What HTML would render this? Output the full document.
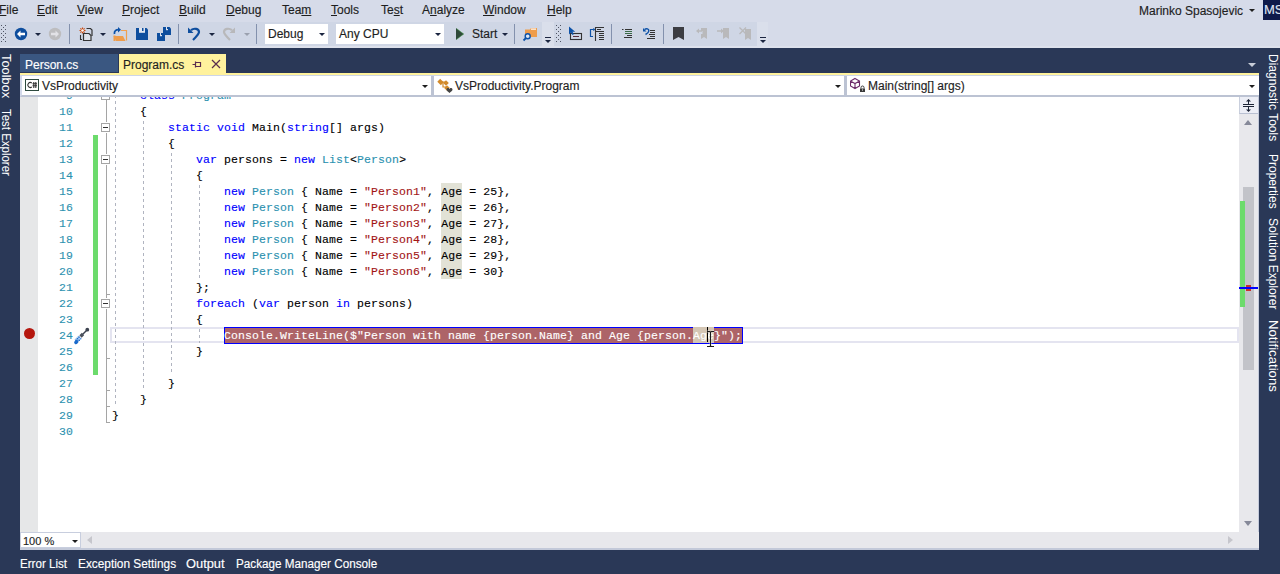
<!DOCTYPE html><html><head><meta charset="utf-8"><style>
*{margin:0;padding:0;box-sizing:border-box}
html,body{width:1280px;height:574px;overflow:hidden}
body{position:relative;background:#2a3857;font-family:"Liberation Sans",sans-serif;font-size:12px;color:#1e1e1e}
.a{position:absolute}
.t{position:absolute;white-space:pre;line-height:14px;-webkit-text-stroke:0.15px}
.menu{top:3px;color:#1e1e1e}
.menu u{text-decoration:underline;text-underline-offset:0.5px;text-decoration-thickness:1px}
.tb{top:22px;height:24px;background:#cfd6e5}
.ovf{top:22px;height:24px;background:#dadfeb}
.sep{top:24px;width:1px;height:20px;background:#8e9bb4}
.code{position:absolute;-webkit-text-stroke:0.12px;left:112px;font-family:"Liberation Mono",monospace;font-size:11.5px;letter-spacing:0.1px;white-space:pre;line-height:16px;height:16px;padding-top:1px;color:#000}
.ln{position:absolute;-webkit-text-stroke:0.1px;left:33px;width:40px;text-align:right;font-family:"Liberation Mono",monospace;font-size:11.5px;letter-spacing:0.1px;line-height:16px;padding-top:1px;color:#2b91af}
.k{color:#0000ff}.ty{color:#2b91af}.s{color:#a31515}
.hl{}
.side{position:absolute;color:#fff;writing-mode:vertical-rl;white-space:pre;line-height:12px}
</style></head><body>
<div class="a" style="left:0;top:0;width:1280px;height:48px;background:#d6dbe9"></div>
<div class="a" style="left:0;top:46px;width:1280px;height:2px;background:#dde1ec"></div>
<div class="t menu" style="left:-1px"><u>F</u>ile</div>
<div class="t menu" style="left:37px"><u>E</u>dit</div>
<div class="t menu" style="left:77px"><u>V</u>iew</div>
<div class="t menu" style="left:122px"><u>P</u>roject</div>
<div class="t menu" style="left:179px"><u>B</u>uild</div>
<div class="t menu" style="left:226px"><u>D</u>ebug</div>
<div class="t menu" style="left:282px">Tea<u>m</u></div>
<div class="t menu" style="left:331px"><u>T</u>ools</div>
<div class="t menu" style="left:381px">Te<u>s</u>t</div>
<div class="t menu" style="left:422px">A<u>n</u>alyze</div>
<div class="t menu" style="left:483px"><u>W</u>indow</div>
<div class="t menu" style="left:547px"><u>H</u>elp</div>
<div class="t" style="left:1139px;top:4px;color:#1e1e1e">Marinko Spasojevic</div>
<div class="a" style="left:1249px;top:9px;width:0;height:0;border-left:3px solid transparent;border-right:3px solid transparent;border-top:3px solid #1e1e1e"></div>
<div class="a" style="left:1263px;top:0;width:17px;height:20px;background:#0e1a4a;overflow:hidden"><div class="t" style="left:1px;top:3px;color:#dfe3f0;font-size:13px">MS</div></div>
<div class="a tb" style="left:0;width:542px"></div>
<div class="a ovf" style="left:542px;width:12px"></div>
<div class="a tb" style="left:554px;width:203px"></div>
<div class="a ovf" style="left:757px;width:11px"></div>
<div class="a" style="left:20px;top:54px;width:98px;height:18px;background:#3a5781"></div>
<div class="t" style="left:25px;top:58px;color:#fff">Person.cs</div>
<div class="a" style="left:119px;top:54px;width:107px;height:19px;background:#fff29d"></div>
<div class="t" style="left:123px;top:58px;color:#1e1e1e">Program.cs</div>
<svg class="a" style="left:192px;top:58px" width="10" height="12" viewBox="0 0 10 12"><path d="M0.5 6.5H3.5M3.5 3.5V9.5M3.5 4.5H8.5V8.5H3.5" stroke="#5a2d4e" stroke-width="1.2" fill="none"/></svg>
<svg class="a" style="left:211px;top:59px" width="10" height="10" viewBox="0 0 10 10"><path d="M1 1L9 9M9 1L1 9" stroke="#5a2d4e" stroke-width="1.2"/></svg>
<div class="a" style="left:1248px;top:63px;width:0;height:0;border-left:4px solid transparent;border-right:4px solid transparent;border-top:4px solid #c8cdd8"></div>
<div id="yl" class="a" style="left:20px;top:73px;width:1239px;height:2px;background:#fff29d"></div>
<div class="a" style="left:20px;top:75px;width:1239px;height:22px;background:#fff;border-top:1px solid #cdd5e8;border-bottom:2px solid #bcc3d3;border-left:2px solid #d3d9ea"></div>
<div class="a" style="left:431px;top:76px;width:3px;height:19px;background:#bcc3d3"></div>
<div class="a" style="left:844px;top:76px;width:3px;height:19px;background:#bcc3d3"></div>
<div class="a" style="left:422px;top:85px;width:0;height:0;border-left:3px solid transparent;border-right:3px solid transparent;border-top:3px solid #1e1e1e"></div>
<div class="a" style="left:835px;top:85px;width:0;height:0;border-left:3px solid transparent;border-right:3px solid transparent;border-top:3px solid #1e1e1e"></div>
<div class="a" style="left:1249px;top:85px;width:0;height:0;border-left:3px solid transparent;border-right:3px solid transparent;border-top:3px solid #1e1e1e"></div>
<div class="a" style="left:25px;top:79px;width:14px;height:12px;border:1px solid #2d4a3e;background:#fff"></div>
<svg class="a" style="left:25px;top:79px" width="14" height="12" viewBox="0 0 14 12"><path d="M6.8 4A2.5 2.5 0 1 0 6.8 8" stroke="#333" stroke-width="1.1" fill="none"/><path d="M8.8 3V9M10.8 3V9M7.5 4.8H12M7.5 6.8H12" stroke="#333" stroke-width="1.1"/></svg>
<div class="t" style="left:42px;top:79px;color:#1e1e1e">VsProductivity</div>
<svg class="a" style="left:437px;top:78px" width="16" height="15" viewBox="0 0 16 15"><g fill="#d28a2a"><rect x="1" y="2" width="5" height="4" transform="rotate(45 3.5 4)"/><rect x="7" y="3" width="4" height="4" transform="rotate(45 9 5)"/><rect x="8" y="8" width="4" height="4" transform="rotate(45 10 10)"/></g><path d="M4 4H9M6 4V9H10" stroke="#d28a2a" stroke-width="1.2" fill="none"/><path d="M9.5 11.5c0-1 0.8-1.5 1.5-1.5s1.2 0.6 1.5 0.9c0.3-0.3 0.8-0.9 1.5-0.9s1.5 0.5 1.5 1.5c0 1.2-1.5 2.3-3 3.4c-1.5-1.1-3-2.2-3-3.4z" fill="#444"/></svg>
<div class="t" style="left:455px;top:79px;color:#1e1e1e">VsProductivity.Program</div>
<svg class="a" style="left:850px;top:77px" width="16" height="16" viewBox="0 0 16 16"><path d="M5 1.5L9.5 4V9L5 11.5L0.5 9V4Z M0.8 4.2L5 6.5L9.2 4.2 M5 6.5V11" stroke="#6c2a6a" stroke-width="1.1" fill="none"/><rect x="10" y="11.5" width="5" height="3.5" fill="#3a3a3a"/><path d="M11 11.5V10.5a1.5 1.5 0 0 1 3 0V11.5" stroke="#3a3a3a" stroke-width="1" fill="none"/><rect x="12" y="12.5" width="1" height="1" fill="#fff"/></svg>
<div class="t" style="left:868px;top:79px;color:#1e1e1e">Main(string[] args)</div>
<div class="a" style="left:20px;top:97px;width:1239px;height:435px;background:#fff"></div>
<div class="a" style="left:20px;top:97px;width:18px;height:435px;background:#e6e7e8"></div>
<div class="a" style="left:20px;top:97px;width:1219px;height:435px;overflow:hidden">
<div class="a" style="left:90px;top:230px;width:1129px;height:16px;border:2px solid #e4e4f0"></div>
<div class="a" style="left:421px;top:86px;width:21px;height:96px;background:#e2e2d6"></div>
<div class="a" style="left:95px;top:-10px;width:1px;height:320px;background:repeating-linear-gradient(transparent 0 2px,#b0b4c0 2px 5px,transparent 5px 6px)"></div>
<div class="a" style="left:123px;top:22px;width:1px;height:272px;background:repeating-linear-gradient(transparent 0 2px,#b0b4c0 2px 5px,transparent 5px 6px)"></div>
<div class="a" style="left:151px;top:54px;width:1px;height:224px;background:repeating-linear-gradient(transparent 0 2px,#b0b4c0 2px 5px,transparent 5px 6px)"></div>
<div class="a" style="left:179px;top:86px;width:1px;height:96px;background:repeating-linear-gradient(transparent 0 2px,#b0b4c0 2px 5px,transparent 5px 6px)"></div>
<div class="a" style="left:179px;top:230px;width:1px;height:16px;background:repeating-linear-gradient(transparent 0 2px,#b0b4c0 2px 5px,transparent 5px 6px)"></div>
<div class="ln" style="top:-10px;left:13px">9</div>
<div class="code" style="top:-10px;left:92px">    <span class="k">class</span> <span class="ty">Program</span></div>
<div class="ln" style="top:6px;left:13px">10</div>
<div class="code" style="top:6px;left:92px">    {</div>
<div class="ln" style="top:22px;left:13px">11</div>
<div class="code" style="top:22px;left:92px">        <span class="k">static</span> <span class="k">void</span> Main(<span class="k">string</span>[] args)</div>
<div class="ln" style="top:38px;left:13px">12</div>
<div class="code" style="top:38px;left:92px">        {</div>
<div class="ln" style="top:54px;left:13px">13</div>
<div class="code" style="top:54px;left:92px">            <span class="k">var</span> persons = <span class="k">new</span> <span class="ty">List</span>&lt;<span class="ty">Person</span>&gt;</div>
<div class="ln" style="top:70px;left:13px">14</div>
<div class="code" style="top:70px;left:92px">            {</div>
<div class="ln" style="top:86px;left:13px">15</div>
<div class="code" style="top:86px;left:92px">                <span class="k">new</span> <span class="ty">Person</span> { Name = <span class="s">&quot;Person1&quot;</span>, <span class="hl">Age</span> = 25},</div>
<div class="ln" style="top:102px;left:13px">16</div>
<div class="code" style="top:102px;left:92px">                <span class="k">new</span> <span class="ty">Person</span> { Name = <span class="s">&quot;Person2&quot;</span>, <span class="hl">Age</span> = 26},</div>
<div class="ln" style="top:118px;left:13px">17</div>
<div class="code" style="top:118px;left:92px">                <span class="k">new</span> <span class="ty">Person</span> { Name = <span class="s">&quot;Person3&quot;</span>, <span class="hl">Age</span> = 27},</div>
<div class="ln" style="top:134px;left:13px">18</div>
<div class="code" style="top:134px;left:92px">                <span class="k">new</span> <span class="ty">Person</span> { Name = <span class="s">&quot;Person4&quot;</span>, <span class="hl">Age</span> = 28},</div>
<div class="ln" style="top:150px;left:13px">19</div>
<div class="code" style="top:150px;left:92px">                <span class="k">new</span> <span class="ty">Person</span> { Name = <span class="s">&quot;Person5&quot;</span>, <span class="hl">Age</span> = 29},</div>
<div class="ln" style="top:166px;left:13px">20</div>
<div class="code" style="top:166px;left:92px">                <span class="k">new</span> <span class="ty">Person</span> { Name = <span class="s">&quot;Person6&quot;</span>, <span class="hl">Age</span> = 30}</div>
<div class="ln" style="top:182px;left:13px">21</div>
<div class="code" style="top:182px;left:92px">            };</div>
<div class="ln" style="top:198px;left:13px">22</div>
<div class="code" style="top:198px;left:92px">            <span class="k">foreach</span> (<span class="k">var</span> person <span class="k">in</span> persons)</div>
<div class="ln" style="top:214px;left:13px">23</div>
<div class="code" style="top:214px;left:92px">            {</div>
<div class="ln" style="top:230px;left:13px">24</div>
<div class="ln" style="top:246px;left:13px">25</div>
<div class="code" style="top:246px;left:92px">            }</div>
<div class="ln" style="top:262px;left:13px">26</div>
<div class="ln" style="top:278px;left:13px">27</div>
<div class="code" style="top:278px;left:92px">        }</div>
<div class="ln" style="top:294px;left:13px">28</div>
<div class="code" style="top:294px;left:92px">    }</div>
<div class="ln" style="top:310px;left:13px">29</div>
<div class="code" style="top:310px;left:92px">}</div>
<div class="ln" style="top:326px;left:13px">30</div>
<div class="a" style="left:204px;top:230px;width:519px;height:17px;background:#ad6468;border:1px solid #0000ff"></div>
<div class="a" style="left:673px;top:230px;width:21px;height:16px;background:#d4c6b4"></div>
<div class="code" style="top:230px;left:204px;color:#fff">Console.WriteLine($&quot;Person with name {person.Name} and Age {person.Age}");</div>
<div class="a" style="left:687px;top:230px;width:1px;height:15px;background:#000"></div>
<svg class="a" style="left:686px;top:233px" width="10" height="18" viewBox="0 0 10 18"><path d="M1 1.5H3.5M5.5 1.5H8M4.5 2V16M1 16.5H8" stroke="#fff" stroke-width="2.2" opacity="0.5"/><path d="M1 1.5H3.5Q4.5 1.5 4.5 2.5V15.5Q4.5 16.5 3.5 16.5H1M8 1.5H5.5Q4.5 1.5 4.5 2.5M4.5 15.5Q4.5 16.5 5.5 16.5H8" stroke="#1a1a1a" stroke-width="1.1" fill="none"/></svg>
<div class="a" style="left:86px;top:3px;width:1px;height:22px;background:#a5a5a5"></div>
<div class="a" style="left:86px;top:36px;width:1px;height:21px;background:#a5a5a5"></div>
<div class="a" style="left:86px;top:68px;width:1px;height:133px;background:#a5a5a5"></div>
<div class="a" style="left:86px;top:212px;width:1px;height:114px;background:#a5a5a5"></div>
<div class="a" style="left:86px;top:197px;width:4px;height:1px;background:#a5a5a5"></div>
<div class="a" style="left:86px;top:261px;width:4px;height:1px;background:#a5a5a5"></div>
<div class="a" style="left:86px;top:293px;width:4px;height:1px;background:#a5a5a5"></div>
<div class="a" style="left:86px;top:309px;width:4px;height:1px;background:#a5a5a5"></div>
<div class="a" style="left:86px;top:325px;width:4px;height:1px;background:#a5a5a5"></div>
<div class="a" style="left:81px;top:-6px;width:9px;height:9px;border:1px solid #a5a5a5;background:#fff"></div>
<div class="a" style="left:83px;top:-2px;width:5px;height:1px;background:#333"></div>
<div class="a" style="left:81px;top:26px;width:9px;height:9px;border:1px solid #a5a5a5;background:#fff"></div>
<div class="a" style="left:83px;top:30px;width:5px;height:1px;background:#333"></div>
<div class="a" style="left:81px;top:58px;width:9px;height:9px;border:1px solid #a5a5a5;background:#fff"></div>
<div class="a" style="left:83px;top:62px;width:5px;height:1px;background:#333"></div>
<div class="a" style="left:81px;top:202px;width:9px;height:9px;border:1px solid #a5a5a5;background:#fff"></div>
<div class="a" style="left:83px;top:206px;width:5px;height:1px;background:#333"></div>
<div class="a" style="left:73px;top:38px;width:5px;height:240px;background:#6cdb6c"></div>
</div>
<div class="a" style="left:24px;top:328px;width:11px;height:11px;border-radius:50%;background:#b5170e"></div>
<svg class="a" style="left:70px;top:324px" width="24" height="22" viewBox="0 0 24 22"><path d="M17.5 5.5L11.5 11.5" stroke="#3d4350" stroke-width="1.4"/><circle cx="17.3" cy="5.7" r="1.9" fill="#3d4350"/><path d="M13 10L10.5 12.5" stroke="#4a505c" stroke-width="3.2"/><path d="M10 13L6 17" stroke="#b3d0f2" stroke-width="4.4" stroke-linecap="butt"/><g fill="#1a6acc"><rect x="8.3" y="12.5" width="1.4" height="1.4"/><rect x="10" y="14" width="1.4" height="1.4" opacity="0.6"/><rect x="6.8" y="14" width="1.4" height="1.4"/><rect x="8.5" y="15.6" width="1.4" height="1.4"/><rect x="5.3" y="15.6" width="1.4" height="1.4" opacity="0.7"/></g><ellipse cx="5.8" cy="17.8" rx="2.3" ry="1.9" transform="rotate(-45 6.3 17.3)" fill="#1a6acc"/></svg>
<div class="a" style="left:1239px;top:97px;width:20px;height:453px;background:#e8e8ec"></div>
<div class="a" style="left:1258px;top:97px;width:1px;height:453px;background:#c4cadb"></div>
<div class="a" style="left:1239px;top:97px;width:19px;height:17px;background:#eceef6;border-left:1px solid #c9cfdd;border-bottom:1px solid #b9c0d2"></div>
<svg class="a" style="left:1239px;top:97px" width="20" height="17" viewBox="0 0 20 17"><g fill="#1b2335"><rect x="4" y="7" width="11" height="1"/><rect x="4" y="9" width="11" height="1"/><rect x="9" y="4" width="1" height="3"/><rect x="9" y="10" width="1" height="3"/><path d="M7 4.5L9.5 2L12 4.5Z"/><path d="M7 12.5L9.5 15L12 12.5Z"/></g></svg>
<div class="a" style="left:1244px;top:120px;width:0;height:0;border-left:4.5px solid transparent;border-right:4.5px solid transparent;border-bottom:5px solid #868999"></div>
<div class="a" style="left:1243px;top:187px;width:11px;height:183px;background:#c2c3c9"></div>
<div class="a" style="left:1240px;top:201px;width:5px;height:106px;background:#6cdb6c"></div>
<div class="a" style="left:1246px;top:285px;width:5px;height:6px;background:#c8312c"></div>
<div class="a" style="left:1239px;top:287px;width:19px;height:2px;background:#0000ff"></div>
<div class="a" style="left:1244px;top:521px;width:0;height:0;border-left:4.5px solid transparent;border-right:4.5px solid transparent;border-top:5px solid #868999"></div>
<div class="a" style="left:20px;top:532px;width:1239px;height:18px;background:#e8e8ec;border-bottom:2px solid #c3c9d9"></div>
<div class="a" style="left:20px;top:532px;width:61px;height:16px;background:#fff;border:1px solid #c8cede"></div>
<div class="t" style="left:23px;top:535px;font-size:11px;line-height:12px;color:#1e1e1e">100 %</div>
<div class="a" style="left:72px;top:540px;width:0;height:0;border-left:3px solid transparent;border-right:3px solid transparent;border-top:3px solid #1e1e1e"></div>
<div class="a" style="left:87px;top:536px;width:0;height:0;border-top:4.5px solid transparent;border-bottom:4.5px solid transparent;border-right:5px solid #c6c6cc"></div>
<div class="a" style="left:1228px;top:536px;width:0;height:0;border-top:4.5px solid transparent;border-bottom:4.5px solid transparent;border-left:5px solid #c6c6cc"></div>
<div class="side" style="left:0px;top:54px;transform:scaleY(1.07);transform-origin:0 0">Toolbox</div>
<div class="side" style="left:0px;top:109px;transform:scaleY(0.955);transform-origin:0 0">Test Explorer</div>
<div class="side" style="left:1267px;top:54px">Diagnostic Tools</div>
<div class="side" style="left:1267px;top:154px">Properties</div>
<div class="side" style="left:1267px;top:218px">Solution Explorer</div>
<div class="side" style="left:1267px;top:320px;transform:scaleY(1.1);transform-origin:0 0">Notifications</div>
<div class="t" style="left:20px;top:557px;color:#fff;transform:scaleX(0.966);transform-origin:0 0">Error List</div>
<div class="t" style="left:78px;top:557px;color:#fff;transform:scaleX(0.987);transform-origin:0 0">Exception Settings</div>
<div class="t" style="left:186px;top:557px;color:#fff;transform:scaleX(1.07);transform-origin:0 0">Output</div>
<div class="t" style="left:236px;top:557px;color:#fff;transform:scaleX(0.975);transform-origin:0 0">Package Manager Console</div>
<svg class="a" style="left:0;top:0" width="780" height="48" viewBox="0 0 780 48"><g fill="#4f5463"><rect x="1" y="25" width="1" height="1"/><rect x="5" y="25" width="1" height="1"/><rect x="1" y="29" width="1" height="1"/><rect x="5" y="29" width="1" height="1"/><rect x="1" y="33" width="1" height="1"/><rect x="5" y="33" width="1" height="1"/><rect x="1" y="37" width="1" height="1"/><rect x="5" y="37" width="1" height="1"/><rect x="1" y="41" width="1" height="1"/><rect x="5" y="41" width="1" height="1"/><rect x="3" y="27" width="1" height="1"/><rect x="3" y="31" width="1" height="1"/><rect x="3" y="35" width="1" height="1"/><rect x="3" y="39" width="1" height="1"/><rect x="556" y="25" width="1" height="1"/><rect x="560" y="25" width="1" height="1"/><rect x="556" y="29" width="1" height="1"/><rect x="560" y="29" width="1" height="1"/><rect x="556" y="33" width="1" height="1"/><rect x="560" y="33" width="1" height="1"/><rect x="556" y="37" width="1" height="1"/><rect x="560" y="37" width="1" height="1"/><rect x="556" y="41" width="1" height="1"/><rect x="560" y="41" width="1" height="1"/><rect x="558" y="27" width="1" height="1"/><rect x="558" y="31" width="1" height="1"/><rect x="558" y="35" width="1" height="1"/><rect x="558" y="39" width="1" height="1"/></g><circle cx="21" cy="34" r="6.2" fill="#0e4e9e"/><path d="M17 34L20.5 30.5V32.8H25V35.2H20.5V37.5Z" fill="#fff"/><path d="M35 33H41L38 36Z" fill="#1b2540"/><circle cx="55" cy="34" r="6.2" fill="#bdbdbf"/><path d="M59 34L55.5 30.5V32.8H51V35.2H55.5V37.5Z" fill="#e2e2e6"/><rect x="69" y="24" width="1" height="20" fill="#8391ad"/><g stroke="#c9490e" stroke-width="1.1"><path d="M82.5 27.5V33.5M79.5 30.5H85.5M80.4 28.4L84.6 32.6M84.6 28.4L80.4 32.6"/></g><circle cx="82.5" cy="30.5" r="1.3" fill="#fff"/><path d="M86.5 28.5H90.5L92 30V36" stroke="#333" stroke-width="1.2" fill="none"/><path d="M83.5 33.5H89L91 35.5V40.5H83.5Z" fill="#dfe2ea" stroke="#333" stroke-width="1.2"/><path d="M80.5 35V39.5H82" stroke="#333" stroke-width="1.1" fill="none"/><path d="M100 33H106L103 36Z" fill="#1b2540"/><path d="M121 30.5H126.5V40.5" stroke="#f0a050" stroke-width="1.2" fill="none"/><path d="M113.5 36H123L125.5 41H116Z" fill="#ef9d4c"/><rect x="113.5" y="35.5" width="2" height="5.5" fill="#ef9d4c"/><path d="M114.5 34C114 31 116 29.5 119 29.7" stroke="#0d52a8" stroke-width="1.8" fill="none"/><path d="M118 27L121 29.8L118 32.5Z" fill="#0d52a8"/><path d="M136 28H146.5L148 29.5V40H136Z" fill="#0e4e9e"/><rect x="139" y="28" width="6" height="4.8" fill="#dfe5f0"/><rect x="142.0" y="28" width="1.5" height="3.0" fill="#0e4e9e"/><path d="M163 27H169.5L171 28.5V35H163Z" fill="#0e4e9e"/><rect x="166" y="27" width="2" height="3.2" fill="#dfe5f0"/><rect x="167.0" y="27" width="1.5" height="2.0" fill="#0e4e9e"/><path d="M157 33H163.5L165 34.5V41H157Z" fill="#0e4e9e"/><rect x="160" y="33" width="2" height="3.2" fill="#dfe5f0"/><rect x="161.0" y="33" width="1.5" height="2.0" fill="#0e4e9e"/><rect x="178" y="24" width="1" height="20" fill="#8391ad"/><path d="M191 30.2C194 27.8 199 28.5 199 32C199 34 197 36 193 40" stroke="#0e4e9e" stroke-width="2.2" fill="none"/><path d="M188 27.5V33H193.5Z" fill="#0e4e9e"/><path d="M209 33H215L212 36Z" fill="#1b2540"/><path d="M232 30.2C229 27.8 224 28.5 224 32C224 34 226 36 230 40" stroke="#b8b8ba" stroke-width="2.2" fill="none"/><path d="M235 27.5V33H229.5Z" fill="#b8b8ba"/><path d="M244 33H250L247 36Z" fill="#9aa0ae"/><rect x="256" y="24" width="1" height="20" fill="#8391ad"/><rect x="265" y="24" width="63" height="20" fill="#fff"/><rect x="336" y="24" width="108" height="20" fill="#fff"/><path d="M319 33H325L322 36Z" fill="#1b2540"/><path d="M435 33H441L438 36Z" fill="#1b2540"/><path d="M456 28V40L464 34Z" fill="#2f4a3a"/><path d="M456.5 28.5L463.5 34L456.5 39.5" stroke="#5fcf5f" stroke-width="0.6" fill="none" opacity="0.6"/><path d="M502 33H508L505 36Z" fill="#1b2540"/><rect x="514" y="24" width="1" height="20" fill="#8391ad"/><path d="M525 29.5H530L531 28H537V37H525Z" fill="#ef9d4c"/><rect x="531" y="28.5" width="5" height="1.2" fill="#fff"/><circle cx="527.7" cy="36.3" r="2.5" fill="#e0e6f0" stroke="#0d52a8" stroke-width="1.4"/><path d="M526 38L523.5 40.5" stroke="#0d52a8" stroke-width="1.8"/><rect x="545" y="37" width="6" height="1" fill="#1b2540"/><path d="M545 40H551L548 43Z" fill="#1b2540"/><rect x="760" y="37" width="6" height="1" fill="#1b2540"/><path d="M760 40H766L763 43Z" fill="#1b2540"/><rect x="570.5" y="33.5" width="11" height="6" fill="none" stroke="#333" stroke-width="1.1"/><rect x="573" y="36" width="6" height="1" fill="#5a3040"/><path d="M569 26.5V34.5L571 32.5L572.5 35L573.8 34.2L572.5 31.8H575.2Z" fill="#0d52a8"/><path d="M593 29.5H590.5V36.5H593" stroke="#0d52a8" stroke-width="1.2" fill="none"/><path d="M593.8 28V31M592.3 29.5H595.3" stroke="#0d52a8" stroke-width="0.9"/><path d="M595.5 41V27.5H604" stroke="#333" stroke-width="1.1" fill="none"/><g fill="#333"><rect x="597" y="29" width="4" height="1"/><rect x="596" y="31" width="8" height="1"/><rect x="599" y="33" width="5" height="1"/><rect x="599" y="35" width="5" height="1"/><rect x="599" y="37" width="5" height="1"/><rect x="599" y="39" width="5" height="1"/></g><rect x="611" y="24" width="1" height="20" fill="#8391ad"/><g><rect x="622" y="29" width="1.5" height="1" fill="#333"/><rect x="625" y="29" width="7" height="1" fill="#333"/><rect x="625" y="31" width="7" height="1" fill="#3b6b47"/><rect x="625" y="33" width="7" height="1" fill="#3b6b47"/><rect x="627" y="35" width="5" height="1" fill="#333"/><rect x="624" y="37" width="8" height="1" fill="#333"/></g><path d="M644.5 29.5C646.5 28 649 28.8 648.8 31C648.6 32.5 647.5 33.5 645.5 34.5" stroke="#0d52a8" stroke-width="1.5" fill="none"/><path d="M643 28V31.5H646.5Z" fill="#0d52a8"/><g fill="#333"><rect x="650" y="30" width="5" height="1"/><rect x="650" y="32" width="5" height="1"/><rect x="649" y="34" width="6" height="1"/><rect x="650" y="36" width="5" height="1"/><rect x="647" y="38" width="8" height="1"/></g><rect x="663" y="24" width="1" height="20" fill="#8391ad"/><path d="M673 27H684V40L678.5 37L673 40Z" fill="#3c3d42"/><g fill="#b9b9bb"><path d="M701 28H707V39L704 37L701 39V34H702.5V31H701Z"/><path d="M696 31L699 28.5V30.3H702V31.7H699V33.5Z"/></g><g fill="#b9b9bb"><path d="M723 28H729V39L726 37L723 39Z"/><path d="M724 31L721 28.5V30.3H717V31.7H721V33.5Z"/></g><g fill="#b9b9bb"><path d="M745 29H751V40L748 38L745 40Z"/></g><path d="M739.5 27.5L746 34M746 27.5L739.5 34" stroke="#b9b9bb" stroke-width="1.3"/></svg>
<div class="t" style="left:268px;top:27px">Debug</div>
<div class="t" style="left:339px;top:27px">Any CPU</div>
<div class="t" style="left:472px;top:27px">Start</div>
</body></html>
